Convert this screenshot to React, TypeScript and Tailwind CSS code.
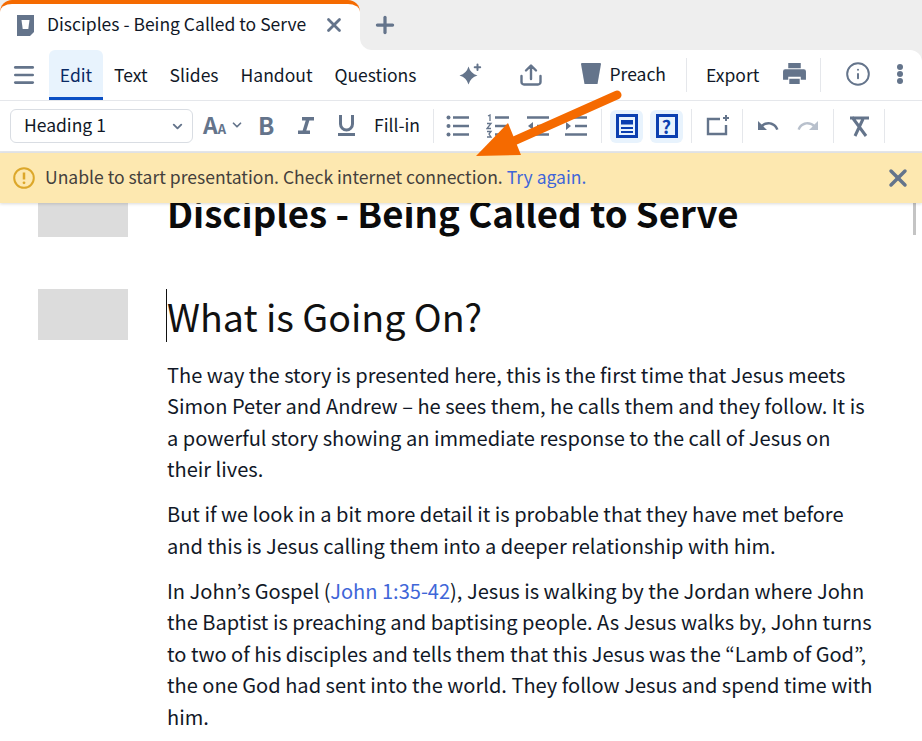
import { ChevronDown, Info, Menu, Plus, X } from "lucide-react";
import type { ReactNode } from "react";

const slate = "#64748b";

function Icon({ children, className = "w-6 h-6", box = "0 0 24 24" }: { children: ReactNode; className?: string; box?: string }) {
  return (
    <svg viewBox={box} className={className} fill="none" stroke={slate} strokeWidth="2">
      {children}
    </svg>
  );
}

function Divider() {
  return <div className="w-px h-[34px] bg-[#e5e7eb] shrink-0" />;
}

function TopBar() {
  return (
    <div className="h-[100px] shrink-0 bg-[#eeeeee]">
      <div className="flex h-[50px] items-center">
        <div className="w-[360px] h-[50px] bg-white rounded-t-xl border-t-4 border-[#f56a00] flex items-center pl-[17px] relative">
          <svg viewBox="0 0 17 21" className="w-[17px] h-[21px] shrink-0 mt-[-3px]">
            <path d="M0 0h17v17l-4 4H0z" fill={slate} />
            <path d="M4.500 5h8l-1.200 9H5.700z" fill="white" />
          </svg>
          <span className="ml-[13px] text-[17.500px] text-[#111827] leading-none mt-[-6px] whitespace-nowrap">Disciples - Being Called to Serve</span>
          <X className="w-[22px] h-[22px] ml-[17px] mt-[-4px] shrink-0" color={slate} strokeWidth={3} />
        </div>
        <div className="w-[15px] h-[50px] bg-white">
          <div className="w-[15px] h-[50px] bg-[#eeeeee] rounded-bl-xl" />
        </div>
        <Plus className="w-[26px] h-[26px] ml-[-3px]" color={slate} strokeWidth={3} />
      </div>
      <div className="flex items-center h-[50px] bg-white rounded-tr-xl text-[17.500px] text-[#111827]">
        <Menu className="w-[26px] h-[26px] ml-[11px] shrink-0" color={slate} strokeWidth={2.500} />
        <div className="ml-[12px] w-[54px] h-[50px] shrink-0 bg-[#e8f3fd] rounded-t-md border-b-[3px] border-[#0b4fc4] pt-[3px] flex items-center justify-center text-[#0a2a66]">Edit</div>
        <span className="ml-[11px]">Text</span>
        <span className="ml-[22px]">Slides</span>
        <span className="ml-[22px]">Handout</span>
        <span className="ml-[22px]">Questions</span>
        <svg viewBox="0 0 24 24" className="w-6 h-6 ml-[41px] mt-[-1px] shrink-0" fill={slate}>
          <path d="M10.500 3.500Q12.500 10.500 19.500 12.500Q12.500 14.500 10.500 21.500Q8.500 14.500 1.500 12.500Q8.500 10.500 10.500 3.500z" />
          <path d="M19.500 1.500v5.500M16.700 4.200h5.500" stroke={slate} strokeWidth="2" strokeLinecap="round" />
        </svg>
        <Icon className="w-6 h-6 ml-[37px] shrink-0 mt-[-1px]">
          <path d="M12 3v13M7 7.500L12 2.500l5 5M2.500 13v6a2.500 2.500 0 0 0 2.500 2.500h14a2.500 2.500 0 0 0 2.500-2.500v-6" strokeWidth="2.400" strokeLinecap="round" strokeLinejoin="round" />
        </Icon>
        <svg viewBox="0 0 20 21" className="w-5 h-[21px] ml-[38px] mt-[-3px] shrink-0" fill={slate}>
          <path d="M1 0h18a1 1 0 0 1 1 1l-3.500 20h-13L0 1a1 1 0 0 1 1-1z" />
        </svg>
        <span className="ml-[9px] mt-[-2px]">Preach</span>
        <div className="ml-[20px]"><Divider /></div>
        <span className="ml-[19px]">Export</span>
        <svg viewBox="0 0 24 24" className="w-[25px] h-[25px] ml-[23px] mt-[-3px] shrink-0" fill={slate}>
          <path d="M6 2h12v5H6zM3 8h18a2 2 0 0 1 2 2v8h-5v-3H6v3H1v-8a2 2 0 0 1 2-2zM7 17h10v5H7z" />
        </svg>
        <div className="ml-[13px]"><Divider /></div>
        <Info className="w-[26px] h-[26px] ml-[24px] mt-[-2px] shrink-0" color={slate} strokeWidth={1.800} />
        <svg viewBox="0 0 6 20" className="w-[6px] h-5 ml-[26px] mt-[-2px] shrink-0" fill={slate}>
          <circle cx="3" cy="3" r="3" />
          <circle cx="3" cy="10" r="3" />
          <circle cx="3" cy="17" r="3" />
        </svg>
      </div>
    </div>
  );
}

function FormatBar() {
  return (
    <div className="h-[53px] shrink-0 flex items-center border-t border-[#e5e7eb] border-b-[2px] border-b-[#e5e7eb] bg-white text-[17.500px] text-[#111827]">
      <div className="ml-[10px] w-[183px] h-[34px] shrink-0 rounded-md border border-[#d9dde3] flex items-center pl-[13px] pr-[7px] justify-between">
        <span className="mt-[-1px]">Heading 1</span>
        <ChevronDown className="w-[15px] h-[15px]" color={slate} strokeWidth={3} />
      </div>
      <span className="ml-[10px] w-[27px] mt-[-3px] font-bold text-[#64748b] text-[23px] leading-none">A<span className="text-[13px]">A</span></span>
      <ChevronDown className="w-[14px] h-[14px] shrink-0 mt-[-3px]" color={slate} strokeWidth={3} />
      <span className="ml-[14px] w-[16px] mt-[-3px] font-bold text-[#64748b] text-[24px] leading-none">B</span>
      <svg viewBox="0 0 18 17" className="ml-[23px] w-[18px] h-[17px] shrink-0 mt-[-1px]" fill="none" stroke={slate} strokeWidth="3.500">
        <path d="M5 1.700h12M1 15.300h12M11 2L7 15" />
      </svg>
      <svg viewBox="0 0 17 21" className="ml-[23px] w-[17px] h-[21px] shrink-0 mt-[-1px]" fill="none" stroke={slate} strokeWidth="3">
        <path d="M2.500 0v9a6 6 0 0 0 12 0V0" />
        <path d="M0 19.500h17" />
      </svg>
      <span className="ml-[19px] w-[46px] mt-[-1px] whitespace-nowrap">Fill-in</span>
      <div className="ml-[13px]"><Divider /></div>
      <Icon className="w-6 h-6 ml-[12px] shrink-0">
        <path d="M7 3.500h16M7 12h16M7 20.500h16" strokeWidth="2.500" />
        <circle cx="2.500" cy="3.500" r="2" fill={slate} stroke="none" />
        <circle cx="2.500" cy="12" r="2" fill={slate} stroke="none" />
        <circle cx="2.500" cy="20.500" r="2" fill={slate} stroke="none" />
      </Icon>
      <Icon className="w-6 h-6 ml-[16px] shrink-0">
        <path d="M9 3.500h14M9 12h14M9 20.500h14" strokeWidth="2.500" />
        <path d="M2 2l2-1v6M1 9.500h4l-4 5h4M1 17.500h4l-2 2.500 2 3h-4" strokeWidth="1.300" />
      </Icon>
      <Icon className="w-6 h-6 ml-[16px] shrink-0">
        <path d="M1 3.500h22M11 12h12M1 20.500h22" strokeWidth="2.500" />
        <path d="M7 8v8l-5-4z" fill={slate} stroke="none" />
      </Icon>
      <Icon className="w-6 h-6 ml-[14px] shrink-0">
        <path d="M1 3.500h22M11 12h12M1 20.500h22" strokeWidth="2.500" />
        <path d="M2 8v8l5-4z" fill={slate} stroke="none" />
      </Icon>
      <div className="ml-[13px]"><Divider /></div>
      <div className="ml-[8px] w-[33px] h-[33px] shrink-0 rounded-md bg-[#e8f3fd] flex items-center justify-center">
        <svg viewBox="0 0 22 24" className="w-[22px] h-6" fill="none" stroke="#0b3fb0" strokeWidth="3">
          <rect x="1.500" y="1.500" width="19" height="21" />
          <path d="M5 6h12v4.500H5z" fill="#0b3fb0" stroke="none" />
          <path d="M5 14h12M5 18h12" strokeWidth="2" />
        </svg>
      </div>
      <div className="ml-[7px] w-[33px] h-[33px] shrink-0 rounded-md bg-[#e8f3fd] flex items-center justify-center">
        <div className="w-[22px] h-6 border-[3px] border-[#0b3fb0] flex items-center justify-center text-[#0b3fb0] font-bold text-[18px] leading-none">?</div>
      </div>
      <div className="ml-[8px]"><Divider /></div>
      <Icon className="w-6 h-6 ml-[14px] shrink-0">
        <path d="M14 5H2v15h18v-9" strokeWidth="2.400" />
        <path d="M20 1v6M17 4h6" strokeWidth="2" />
      </Icon>
      <div className="ml-[12px]"><Divider /></div>
      <svg viewBox="0 0 24 24" className="w-6 h-6 ml-[13px] shrink-0" fill={slate}>
        <path d="M12.500 8c-2.650 0-5.050.990-6.900 2.600L2 7v9h9l-3.620-3.620c1.390-1.160 3.160-1.880 5.120-1.880 3.540 0 6.550 2.310 7.600 5.500l2.370-.780C21.080 11.030 17.150 8 12.500 8z" />
      </svg>
      <svg viewBox="0 0 24 24" className="w-6 h-6 ml-[16px] shrink-0" fill="#b8c0cc">
        <path d="M18.400 10.600C16.550 8.990 14.150 8 11.500 8c-4.650 0-8.580 3.030-9.960 7.220L3.900 16c1.050-3.190 4.050-5.500 7.600-5.500 1.950 0 3.730.720 5.120 1.880L13 16h9V7l-3.600 3.600z" />
      </svg>
      <div className="ml-[13px]"><Divider /></div>
      <Icon className="w-6 h-6 ml-[13px] shrink-0">
        <path d="M3 4h19M5 3l14 19M16 5L8 22" strokeWidth="3" />
      </Icon>
      <div className="ml-[13px]"><Divider /></div>
    </div>
  );
}

function Banner() {
  return (
    <div className="relative z-10 h-[50px] shrink-0 bg-[#fde8b0] shadow-[0_1px_3px_rgba(0,0,0,0.15)] flex items-center pl-[13px] pr-[10px] text-[17.550px] text-[#44403c]">
      <svg viewBox="0 0 22 22" className="w-[22px] h-[22px] shrink-0" fill="none" stroke="#dca72a" strokeWidth="2">
        <circle cx="11" cy="11" r="9.800" />
        <path d="M11 5.500v7" strokeWidth="2.500" />
        <circle cx="11" cy="15.800" r="1.400" fill="#dca72a" stroke="none" />
      </svg>
      <span className="ml-[10px] mt-[-2px] whitespace-nowrap">
        Unable to start presentation. Check internet connection. <span className="text-[#3f66d8]">Try again.</span>
      </span>
      <X className="w-[28px] h-[28px] ml-auto" color={slate} strokeWidth={3} />
    </div>
  );
}

function Block({ thumb, children }: { thumb?: string; children: ReactNode }) {
  return (
    <div className="flex">
      <div className="w-[167px] shrink-0 pl-[38px]">{thumb && <div className={`w-[90px] bg-[#dcdcdc] ${thumb}`} />}</div>
      <div className="w-[720px]">{children}</div>
    </div>
  );
}

function Document() {
  return (
    <div className="relative flex-1 overflow-hidden bg-white text-[#111827]">
      <div className="absolute right-[6px] top-0 w-[3px] h-[32px] bg-[#c4c4c4]" />
      <Block thumb="h-[34px]">
        <h1 className="text-[36.600px] font-bold leading-[50px] mt-[-15px] text-[#0b0b0b] whitespace-nowrap">Disciples - Being Called to Serve</h1>
      </Block>
      <div className="mt-[51px]">
        <Block thumb="h-[51px]">
          <h2 className="text-[37.600px] leading-[53px] text-[#111111] border-l border-[#111111] ml-[-1px] whitespace-nowrap">What is Going On?</h2>
        </Block>
      </div>
      <div className="mt-[16.500px]">
        <Block>
          <div className="text-[20.060px] leading-[31.500px] flex flex-col gap-[13.500px] whitespace-nowrap">
            <p>
              The way the story is presented here, this is the first time that Jesus meets<br />
              Simon Peter and Andrew – he sees them, he calls them and they follow. It is<br />
              a powerful story showing an immediate response to the call of Jesus on<br />
              their lives.
            </p>
            <p>
              But if we look in a bit more detail it is probable that they have met before<br />
              and this is Jesus calling them into a deeper relationship with him.
            </p>
            <p>
              In John’s Gospel (<span className="text-[#3f66d8]">John 1:35-42</span>), Jesus is walking by the Jordan where John<br />
              the Baptist is preaching and baptising people. As Jesus walks by, John turns<br />
              to two of his disciples and tells them that this Jesus was the “Lamb of God”,<br />
              the one God had sent into the world. They follow Jesus and spend time with<br />
              him.
            </p>
          </div>
        </Block>
      </div>
    </div>
  );
}

export default function App() {
  return (
    <div className="relative h-[741px] w-[922px] overflow-hidden flex flex-col bg-white font-['Noto_Sans_CJK_KR','Noto_Sans',sans-serif]">
      <TopBar />
      <FormatBar />
      <Banner />
      <Document />
      <svg viewBox="0 0 922 741" className="absolute inset-0 w-[922px] h-[741px] z-20 pointer-events-none">
        <path d="M617 95L505 145" stroke="#f56a00" strokeWidth="9" strokeLinecap="round" />
        <path d="M476 156L508 123L521 155z" fill="#f56a00" />
      </svg>
    </div>
  );
}
